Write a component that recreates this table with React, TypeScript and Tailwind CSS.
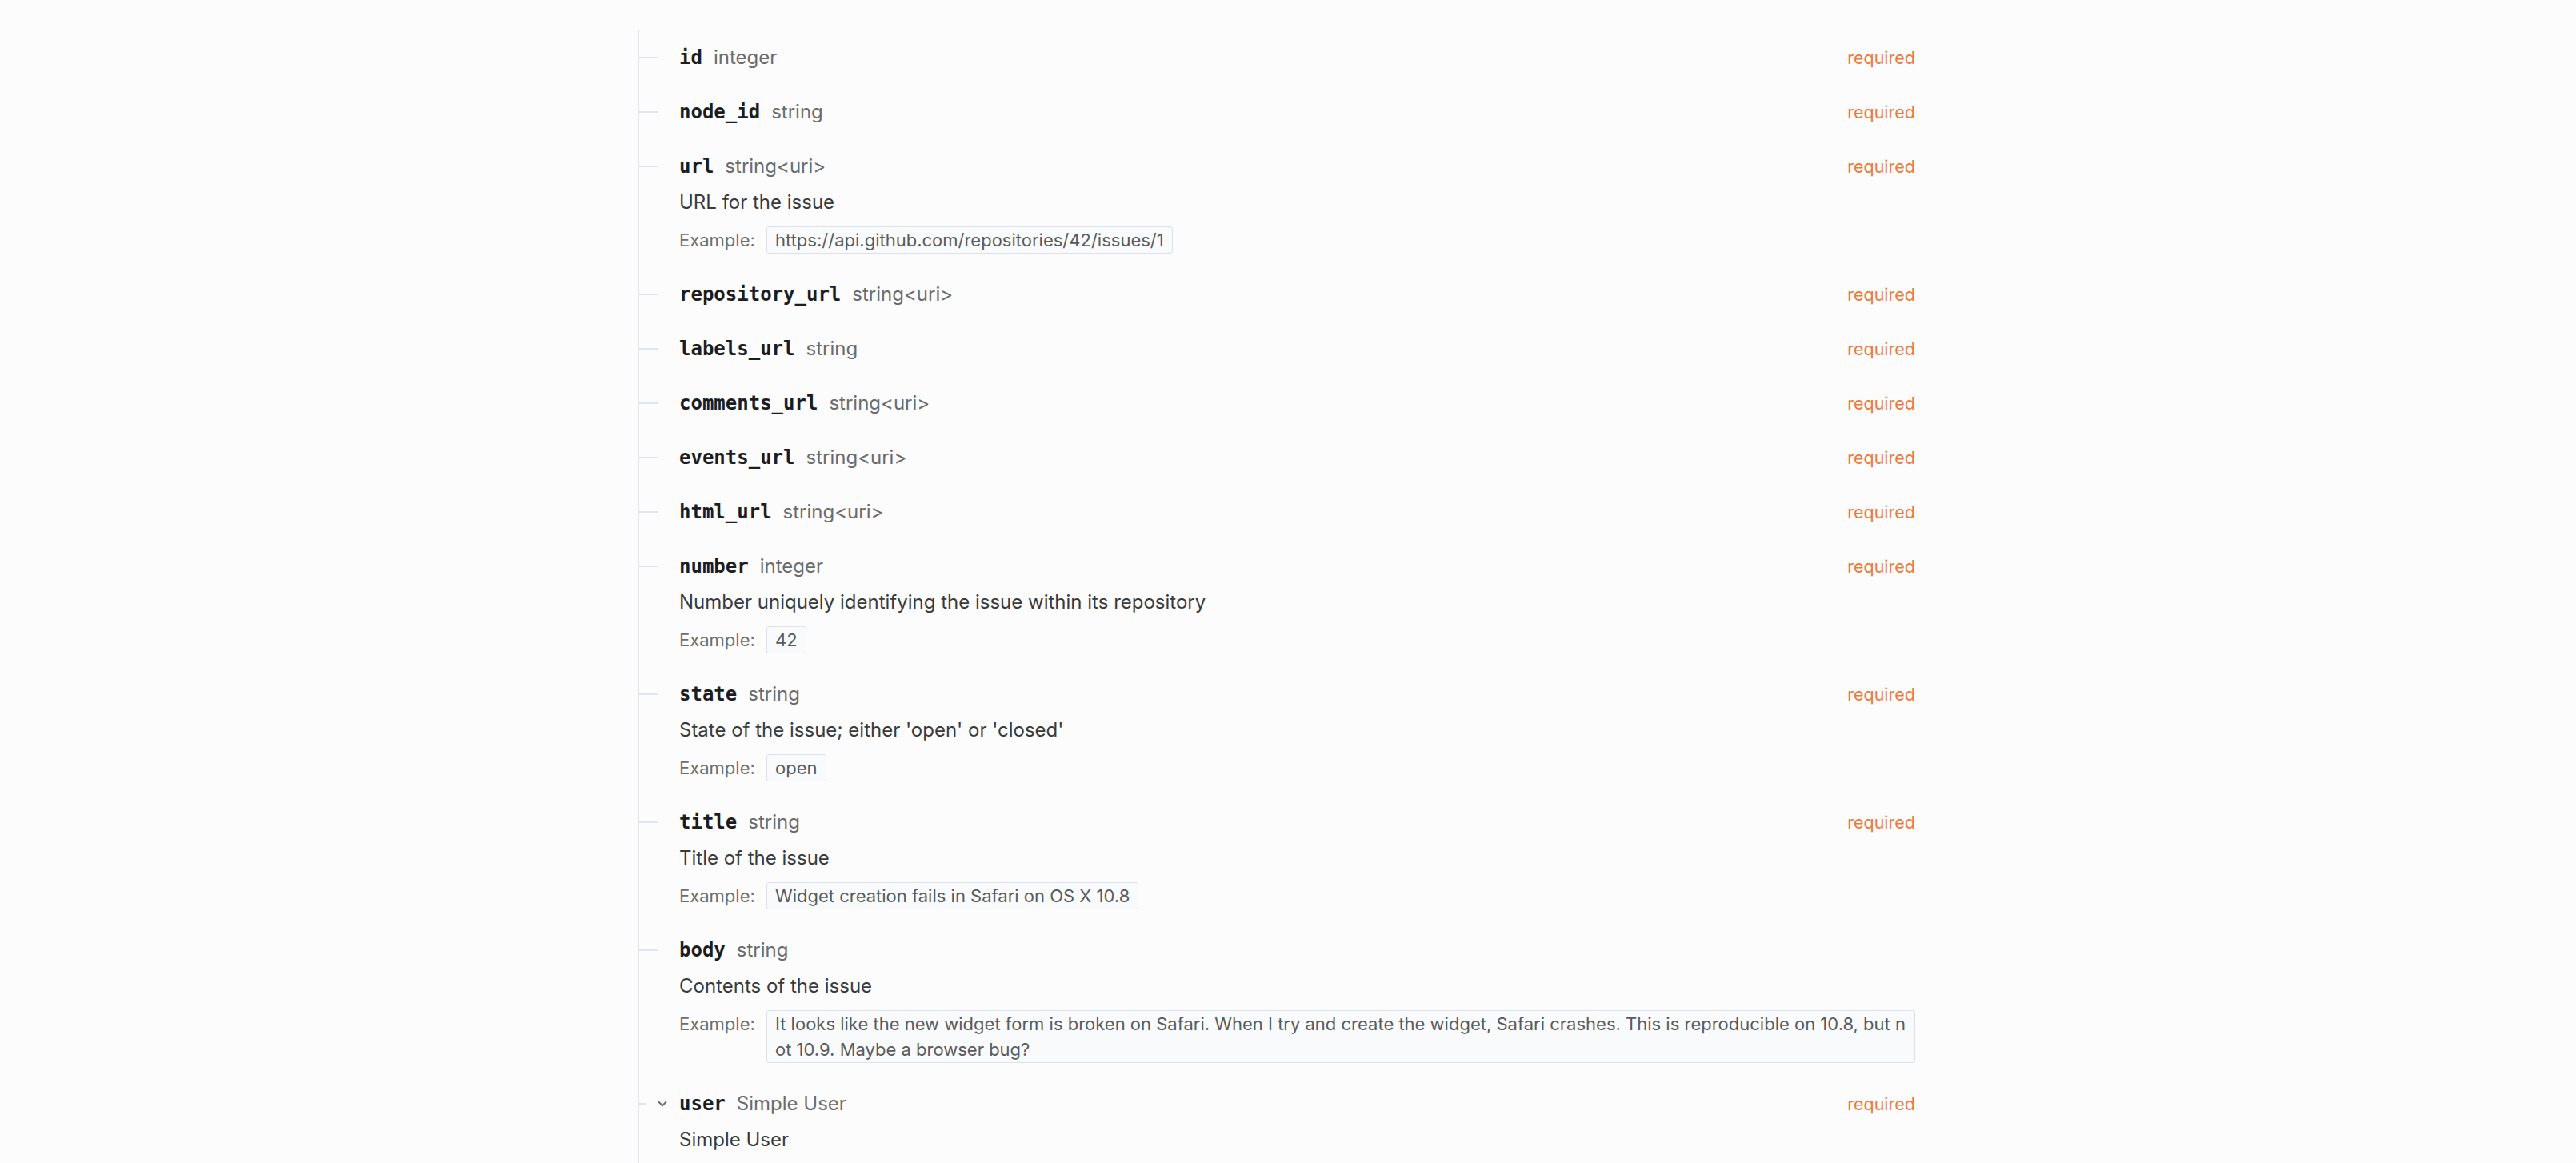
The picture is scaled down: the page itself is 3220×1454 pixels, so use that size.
import { ChevronDown } from "lucide-react"

type Field = {
  name: string
  type: string
  required?: boolean
  description?: string
  example?: string
  expandable?: boolean
}

const fields: Field[] = [
  { name: "id", type: "integer", required: true },
  { name: "node_id", type: "string", required: true },
  {
    name: "url",
    type: "string<uri>",
    required: true,
    description: "URL for the issue",
    example: "https://api.github.com/repositories/42/issues/1",
  },
  { name: "repository_url", type: "string<uri>", required: true },
  { name: "labels_url", type: "string", required: true },
  { name: "comments_url", type: "string<uri>", required: true },
  { name: "events_url", type: "string<uri>", required: true },
  { name: "html_url", type: "string<uri>", required: true },
  {
    name: "number",
    type: "integer",
    required: true,
    description: "Number uniquely identifying the issue within its repository",
    example: "42",
  },
  {
    name: "state",
    type: "string",
    required: true,
    description: "State of the issue; either 'open' or 'closed'",
    example: "open",
  },
  {
    name: "title",
    type: "string",
    required: true,
    description: "Title of the issue",
    example: "Widget creation fails in Safari on OS X 10.8",
  },
  {
    name: "body",
    type: "string",
    description: "Contents of the issue",
    example:
      "It looks like the new widget form is broken on Safari. When I try and create the widget, Safari crashes. This is reproducible on 10.8, but not 10.9. Maybe a browser bug?",
  },
  {
    name: "user",
    type: "Simple User",
    required: true,
    description: "Simple User",
    expandable: true,
  },
]

function FieldRow({ field }: { field: Field }) {
  return (
    <div className="flex py-4">
      {/* 左侧连接线 */}
      <div className="flex h-9 w-[50px] shrink-0 items-center">
        {field.expandable ? (
          <>
            <div className="h-[2px] w-[9px] bg-[#e1e5ef]" />
            <ChevronDown className="ml-[11px] size-[18px] text-[#6b6b6b]" strokeWidth={2.5} />
          </>
        ) : (
          <div className="h-[2px] w-[24px] bg-[#e1e5ef]" />
        )}
      </div>

      <div className="min-w-0 flex-1">
        <div className="flex h-9 items-center justify-between">
          <div className="flex items-baseline">
            <span className="font-['DejaVu_Sans_Mono',monospace] text-[24px] font-bold text-[#1d1d1f]">
              {field.name}
            </span>
            <span className="ml-[14px] text-[24px] text-[#6b6b6b]">{field.type}</span>
          </div>
          {field.required && (
            <span className="text-[21.5px] text-[#f0783a]">required</span>
          )}
        </div>

        {field.description && (
          <div className="mt-[9px] text-[24px] leading-9 text-[#3a3a3a]">{field.description}</div>
        )}

        {field.example && (
          <div className="mb-[1px] mt-3 flex items-start text-[22px]">
            <span className="w-[109px] shrink-0 leading-[34px] text-[#6e6e6e]">Example:</span>
            <span className="min-w-0 break-all rounded-[3px] border border-[#dde1eb] bg-[#f9fafb] px-[10px] leading-[32px] text-[#5a5a5a]">
              {field.example}
            </span>
          </div>
        )}
      </div>
    </div>
  )
}

export default function App() {
  return (
    <div className="h-[1454px] overflow-hidden bg-[#fcfcfd] font-['Inter',sans-serif]">
      <div className="ml-[797px] w-[1597px] pt-[38px]">
        <div className="min-h-[1454px] border-l-2 border-[#e1e5ef]">
          {fields.map((f) => (
            <FieldRow key={f.name} field={f} />
          ))}
        </div>
      </div>
    </div>
  )
}
